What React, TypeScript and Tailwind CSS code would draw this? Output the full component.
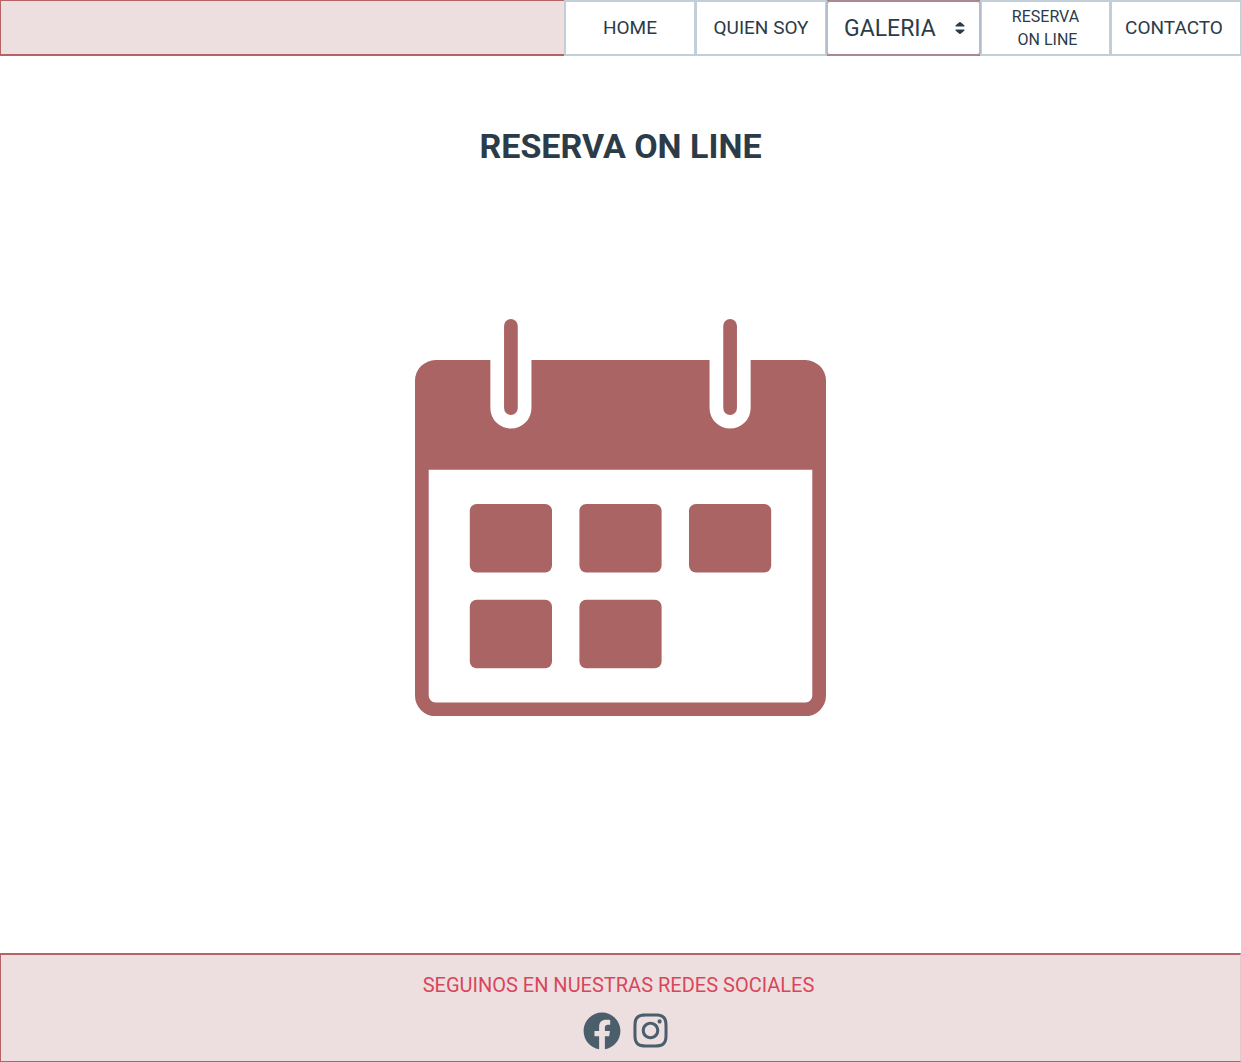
import { FaFacebook, FaInstagram } from "react-icons/fa";

const cell =
  "flex items-center justify-center border-2 border-[#c2ced8] bg-white text-center";

function Calendar() {
  return (
    <svg viewBox="0 0 30 29" className="w-[411px] max-w-full" fill="#ab6464" role="img" aria-label="Calendario">
      <path
        fillRule="evenodd"
        d="M1.5 3H5.5V6.5A1.5 1.5 0 0 0 8.5 6.5V3H21.5V6.5A1.5 1.5 0 0 0 24.5 6.5V3H28.5A1.5 1.5 0 0 1 30 4.5V27.5A1.5 1.5 0 0 1 28.5 29H1.5A1.5 1.5 0 0 1 0 27.5V4.5A1.5 1.5 0 0 1 1.5 3ZM1 11V27.5A.5 .5 0 0 0 1.5 28H28.5A.5 .5 0 0 0 29 27.5V11Z"
      />
      <rect x="6.5" y="0" width="1" height="7" rx="0.5" />
      <rect x="22.5" y="0" width="1" height="7" rx="0.5" />
      <rect x="4" y="13.5" width="6" height="5" rx="0.5" />
      <rect x="12" y="13.5" width="6" height="5" rx="0.5" />
      <rect x="20" y="13.5" width="6" height="5" rx="0.5" />
      <rect x="4" y="20.5" width="6" height="5" rx="0.5" />
      <rect x="12" y="20.5" width="6" height="5" rx="0.5" />
    </svg>
  );
}

export default function App() {
  return (
    <div className="flex min-h-screen flex-col bg-white font-[Roboto,sans-serif] text-[#2b3b48]">
      <header className="flex justify-end border-t border-b-2 border-l border-[#b56367] bg-[#eddfdf]">
        <nav className="-mt-px -mb-0.5 flex h-14 text-[19px]">
          <a href="#home" className={`${cell} w-[132px]`}>HOME</a>
          <a href="#quien-soy" className={`${cell} -ml-px w-[132px]`}>QUIEN SOY</a>
          <div className="relative -ml-px w-[155px]">
            <select
              aria-label="Galeria"
              className="h-full w-full appearance-none rounded-sm border-2 border-x-[#b4bdca] border-y-[#a98a92] bg-white pt-0.5 pl-4 text-[23px]"
            >
              <option>GALERIA</option>
            </select>
            <svg viewBox="0 0 10 14" className="pointer-events-none absolute top-[21px] right-4 h-3.5 w-2.5" fill="#2b3b48" aria-hidden="true">
              <path d="M1.2 5.6C.5 5.6.2 4.800.7 4.300L4.300 1.200Q5 .7 5.700 1.200L9.300 4.300C9.800 4.800 9.500 5.600 8.800 5.600ZM1.200 8.400C.5 8.400.2 9.200.7 9.700L4.300 12.800Q5 13.300 5.700 12.800L9.300 9.700C9.800 9.200 9.500 8.400 8.800 8.400Z" />
            </svg>
          </div>
          <a href="#reserva" className={`${cell} -ml-px w-[131px] text-base leading-[23px]`}>
            <span>
              RESERVA
              <br />
              &nbsp;ON LINE
            </span>
          </a>
          <a href="#contacto" className={`${cell} -ml-px w-[131px] border-r pr-1`}>CONTACTO</a>
        </nav>
      </header>

      <main className="flex flex-1 flex-col items-center">
        <h1 className="mt-[69px] text-[34px] leading-[42px] font-bold">RESERVA ON LINE</h1>
        <a href="#turnos" className="mt-[152px] mb-16 block">
          <Calendar />
        </a>
      </main>

      <footer className="flex h-[109px] flex-col items-center border border-t-2 border-[#b56367] border-r-[#e2c9ce] bg-[#eddfdf]">
        <p className="mt-4 pr-1 text-[20px] leading-7 text-[#d9465c]">SEGUINOS EN NUESTRAS REDES SOCIALES</p>
        <div className="mt-3 flex items-center gap-3 pl-2.5 text-[#4b5e6c]">
          <a href="#facebook" aria-label="Facebook"><FaFacebook className="size-[38px]" /></a>
          <a href="#instagram" aria-label="Instagram"><FaInstagram className="h-[39px] w-[35px]" /></a>
        </div>
      </footer>
    </div>
  );
}
